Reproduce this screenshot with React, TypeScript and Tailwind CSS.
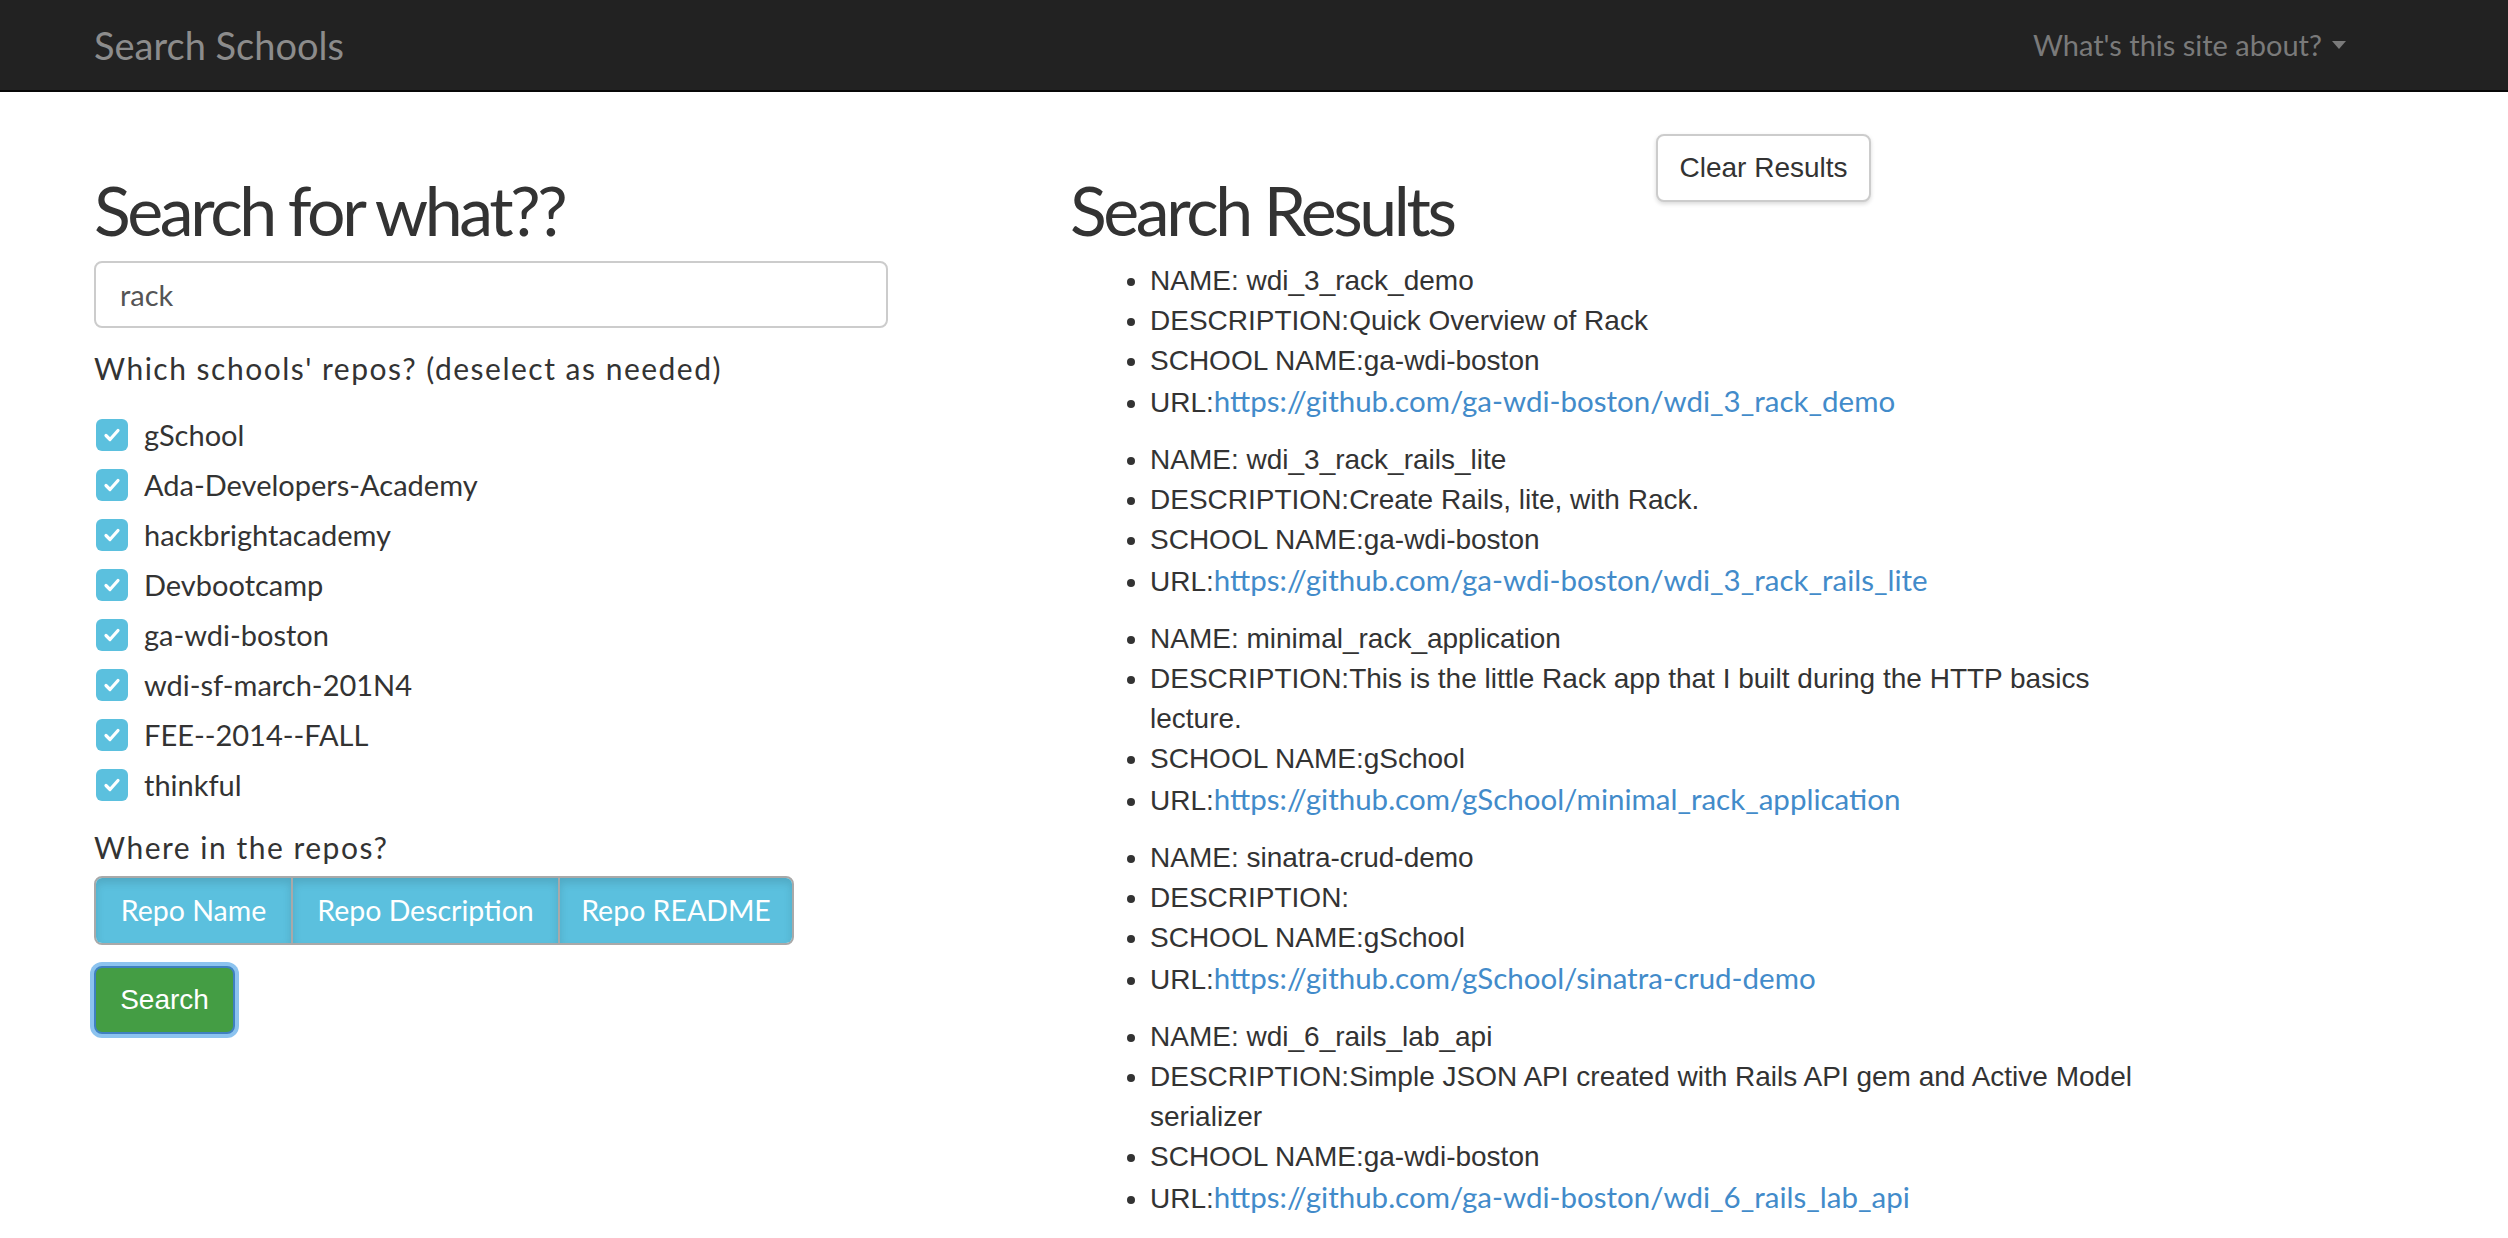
import { ChevronDown } from "lucide-react";

const schools = [
    "gSchool",
    "Ada-Developers-Academy",
    "hackbrightacademy",
    "Devbootcamp",
    "ga-wdi-boston",
    "wdi-sf-march-201N4",
    "FEE--2014--FALL",
    "thinkful",
];

const results = [
    { name: "wdi_3_rack_demo", desc: "Quick Overview of Rack", school: "ga-wdi-boston", url: "https://github.com/ga-wdi-boston/wdi_3_rack_demo" },
    { name: "wdi_3_rack_rails_lite", desc: "Create Rails, lite, with Rack.", school: "ga-wdi-boston", url: "https://github.com/ga-wdi-boston/wdi_3_rack_rails_lite" },
    { name: "minimal_rack_application", desc: "This is the little Rack app that I built during the HTTP basics lecture.", school: "gSchool", url: "https://github.com/gSchool/minimal_rack_application" },
    { name: "sinatra-crud-demo", desc: "", school: "gSchool", url: "https://github.com/gSchool/sinatra-crud-demo" },
    { name: "wdi_6_rails_lab_api", desc: "Simple JSON API created with Rails API gem and Active Model serializer", school: "ga-wdi-boston", url: "https://github.com/ga-wdi-boston/wdi_6_rails_lab_api" },
];

const humanist = "font-['Lato','Noto_Sans',sans-serif]";
const helv = "font-['Liberation_Sans',Arial,sans-serif]";

function Check() {
    return (
        <span className="w-[32px] h-[32px] rounded-[6px] bg-[#5bc0de] flex items-center justify-center shrink-0">
            <svg width="18" height="18" viewBox="0 0 18 18" fill="none">
                <path d="M3 9.5l4 4 8-9" stroke="white" strokeWidth="3.2" strokeLinecap="round" strokeLinejoin="round" />
            </svg>
        </span>
    );
}

export default function App() {
    return (
        <div className={`min-h-screen bg-white text-[#333] ${humanist}`}>
            <nav className="h-[92px] bg-[#222] border-b-2 border-[#080808] flex items-center justify-between pl-[94px] pr-[162px]">
                <span className="text-[38px] text-[#8c8c8c]">Search Schools</span>
                <span className="flex items-center gap-[10px] text-[29px] text-[#7a7a7a]">
                    What's this site about?
                    <svg width="14" height="8" viewBox="0 0 14 8"><path d="M0 0h14L7 8z" fill="#7a7a7a" /></svg>
                </span>
            </nav>

            <main className="flex pl-[94px]">
                <section className="w-[976px] shrink-0">
                    <h1 className="mt-[78px] text-[68px] leading-[79px] tracking-[-0.05em] text-[#333]">Search for what??</h1>
                    <div className="mt-[12px] w-[794px] h-[67px] border-2 border-[#ccc] rounded-[8px] flex items-center px-[24px] text-[29px] text-[#555]">
                        rack
                    </div>
                    <div className="mt-[20px] leading-[40px] text-[30px] tracking-[0.05em] text-[#333]">Which schools' repos? (deselect as needed)</div>
                    <ul className="mt-[22px]">
                        {schools.map((s) => (
                            <li key={s} className="h-[50px] flex items-center gap-[16px] pl-[2px]">
                                <Check />
                                <span className="text-[29px]">{s}</span>
                            </li>
                        ))}
                    </ul>
                    <div className="mt-[17px] leading-[40px] text-[30px] tracking-[0.05em]">Where in the repos?</div>
                    <div className="mt-[9px] flex w-[700px] h-[69px] border-2 border-[#a9a9a9] rounded-[8px] overflow-hidden text-white text-[28.5px]">
                        <span className="w-[195px] flex items-center justify-center bg-[#5bc0de] shadow-[inset_0_5px_9px_rgba(0,0,0,0.12)]">Repo Name</span>
                        <span className="w-[267px] flex items-center justify-center bg-[#5bc0de] border-l-2 border-[#a9a9a9] shadow-[inset_0_5px_9px_rgba(0,0,0,0.12)]">Repo Description</span>
                        <span className="flex-1 flex items-center justify-center bg-[#5bc0de] border-l-2 border-[#a9a9a9] shadow-[inset_0_5px_9px_rgba(0,0,0,0.12)]">Repo README</span>
                    </div>
                    <button className={`mt-[21px] w-[141px] h-[68px] rounded-[8px] bg-[#449d44] border-2 border-[#3f80c0] shadow-[0_0_0_4px_rgba(102,175,233,0.75)] text-white text-[28px] ${helv}`}>
                        Search
                    </button>
                </section>

                <section className="w-[1110px] shrink-0">
                    <div className="flex items-start">
                        <h1 className="w-[586px] mt-[78px] text-[68px] leading-[79px] tracking-[-0.05em]">Search Results</h1>
                        <button className={`mt-[42px] w-[215px] h-[68px] rounded-[8px] bg-white border-2 border-[#ccc] shadow-[0_2px_4px_rgba(0,0,0,0.15)] text-[28px] text-[#333] ${helv}`}>
                            Clear Results
                        </button>
                    </div>
                    <div className={`mt-[12px] ${helv} text-[28px] leading-[40px] text-[#333]`}>
                        {results.map((r) => (
                            <ul key={r.name} className="list-disc pl-[80px] mb-[19px]">
                                <li>NAME: {r.name}</li>
                                <li>DESCRIPTION:{r.desc}</li>
                                <li>SCHOOL NAME:{r.school}</li>
                                <li className="h-[40px]">URL:<a href="#" className={`${humanist} text-[#428bca] text-[29.5px] leading-[40px]`}>{r.url}</a></li>
                            </ul>
                        ))}
                    </div>
                </section>
            </main>
        </div>
    );
}
